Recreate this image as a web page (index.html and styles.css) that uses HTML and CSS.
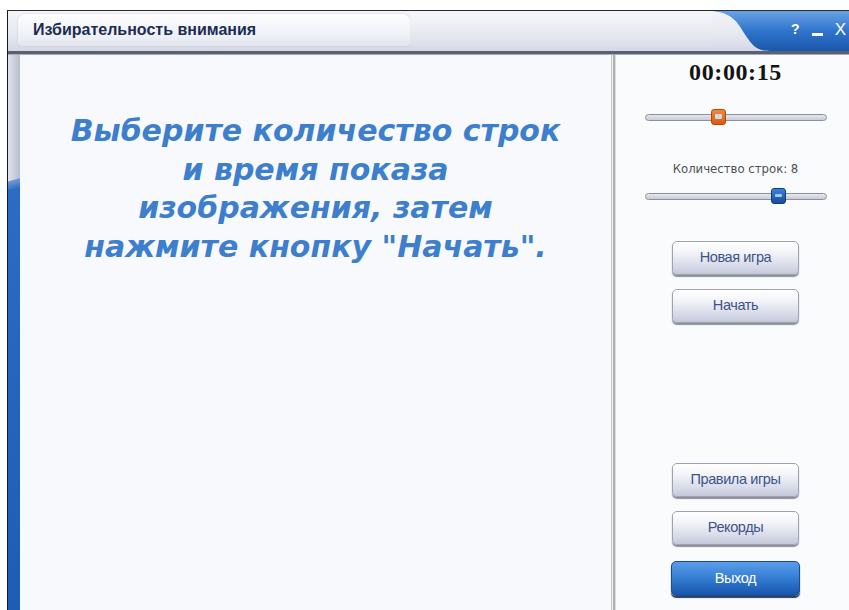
FILE: index.html
```html
<!DOCTYPE html>
<html lang="ru">
<head>
<meta charset="utf-8">
<title>Избирательность внимания</title>
<link rel="stylesheet" href="styles.css">
</head>
<body>
<div class="window">
  <div class="titlebar">
    <div class="title-tab">Избирательность внимания</div>
    <div class="title-fill"></div>
    <div class="title-controls">
      <svg class="controls-bg" width="137" height="42" viewBox="0 0 137 42">
        <defs>
          <linearGradient id="cg" x1="0" y1="0" x2="0" y2="1">
            <stop offset="0" stop-color="#6aa2e4"/>
            <stop offset="0.5" stop-color="#2f74cc"/>
            <stop offset="1" stop-color="#1a58ac"/>
          </linearGradient>
        </defs>
        <path d="M0 0 H137 V40 H58 C44 40 40 34 32 22 C24 8 18 2 0 0 Z" fill="url(#cg)"/>
      </svg>
      <span class="ctl ctl-help">?</span>
      <span class="ctl ctl-min"></span>
      <span class="ctl ctl-close">X</span>
    </div>
  </div>
  <div class="body">
    <div class="side-rail"></div>
    <div class="main">
      <p class="prompt">Выберите количество строк<br>и время показа<br>изображения, затем<br>нажмите кнопку "Начать".</p>
    </div>
    <div class="divider"></div>
    <div class="panel">
      <div class="timer">00:00:15</div>
      <div class="slider slider-time">
        <div class="track"></div>
        <div class="thumb thumb-orange"></div>
      </div>
      <div class="rows-label">Количество строк: 8</div>
      <div class="slider slider-rows">
        <div class="track"></div>
        <div class="thumb thumb-blue"></div>
      </div>
      <div class="btn-group top-group">
        <button class="btn">Новая игра</button>
        <button class="btn">Начать</button>
      </div>
      <div class="btn-group bottom-group">
        <button class="btn">Правила игры</button>
        <button class="btn">Рекорды</button>
        <button class="btn btn-exit">Выход</button>
      </div>
    </div>
  </div>
</div>
</body>
</html>
```
FILE: styles.css
```css
html, body {
  margin: 0;
  padding: 0;
  background: #ffffff;
}
body {
  padding: 10px 0 0 7px;
  width: 849px;
  height: 610px;
  box-sizing: border-box;
  overflow: hidden;
  font-family: "Liberation Sans", Arial, sans-serif;
}
.window {
  width: 842px;
  height: 600px;
  display: flex;
  flex-direction: column;
  border-left: 1px solid #1a1a1a;
  border-top: 1px solid #2a2a2a;
  box-sizing: border-box;
}

/* Title bar */
.titlebar {
  height: 40px;
  display: flex;
  align-items: stretch;
  background: linear-gradient(#f4f5f9, #e6e8f0 60%, #d4d8e4);
  border-bottom: 3px solid #5a6072;
  box-shadow: 0 1px 0 #a8acb8;
  position: relative;
}
.title-tab {
  margin: 3px 0 5px 10px;
  width: 392px;
  border-radius: 7px 7px 4px 4px;
  background: linear-gradient(#fdfdfe, #eef0f6 70%, #e2e5ee);
  box-shadow: 0 0 2px #c0c4d0;
  font-weight: bold;
  font-size: 16px;
  color: #1c2c54;
  padding: 0 0 0 15px;
  box-sizing: border-box;
  display: flex;
  align-items: center;
}
.title-fill {
  flex: 1;
  background: linear-gradient(#f6f7fa, #dcdfe9);
  margin: 3px 0 5px 0;
}
.title-controls {
  width: 137px;
  position: relative;
  display: flex;
  align-items: center;
  justify-content: flex-end;
  gap: 12px;
  padding-right: 3px;
  box-sizing: border-box;
  color: #ffffff;
  font-size: 15px;
}
.controls-bg {
  position: absolute;
  left: 0;
  top: 0;
}
.ctl {
  position: relative;
  line-height: 1;
  margin-bottom: 4px;
}
.ctl-help {
  font-weight: bold;
  font-size: 14px;
}
.ctl-min {
  width: 11px;
  height: 3px;
  background: #ffffff;
  margin-top: 10px;
}
.ctl-close {
  font-size: 17px;
}

/* Body */
.body {
  flex: 1;
  display: flex;
  min-height: 0;
}
.side-rail {
  width: 12px;
  background:
    linear-gradient(164deg, transparent 0, transparent 122px, #6f9ad8 123px, #2c6cc4 132px, #1e5db6 100%),
    linear-gradient(90deg, #dfe2ea, #c9cdd9 60%, #b8bdcc);
}
.main {
  width: 591px;
  background: #f8f9fc;
}
.prompt {
  margin: 58px 0 0 0;
  text-align: center;
  font-family: "DejaVu Sans", Verdana, sans-serif;
  font-weight: bold;
  font-style: italic;
  font-size: 30px;
  line-height: 38.5px;
  color: #3d7fcc;
  letter-spacing: 0;
}
.divider {
  width: 5px;
  background: linear-gradient(90deg, #c6c8c6 0, #c6c8c6 1px, #f0f0f0 1px, #f0f0f0 2px, #b0b2b0 2px, #b0b2b0 4px, #dcdcdc 4px);
}
.panel {
  flex: 1;
  background: #fafbfd;
  display: flex;
  flex-direction: column;
  align-items: center;
  padding-left: 6px;
}
.timer {
  margin-top: 5px;
  font-family: "Liberation Serif", "Times New Roman", serif;
  font-weight: bold;
  font-size: 24px;
  line-height: 26px;
  color: #141414;
  letter-spacing: 0.6px;
}
.slider {
  position: relative;
  width: 182px;
  height: 16px;
  display: flex;
  align-items: center;
}
.slider-time {
  margin-top: 24px;
}
.slider-rows {
  margin-top: 12px;
}
.track {
  width: 100%;
  height: 7px;
  border-radius: 4px;
  border: 1px solid #8a90a0;
  background: linear-gradient(#e6e8ee, #c8ccd8);
  box-sizing: border-box;
}
.thumb {
  position: absolute;
  top: 0;
  width: 15px;
  height: 16px;
  border-radius: 3px;
  box-sizing: border-box;
}
.thumb::after {
  content: "";
  position: absolute;
  left: 3px;
  right: 3px;
  top: 4px;
  bottom: 5px;
  background: #d4d8e4;
  border-radius: 1px;
}
.thumb-orange {
  left: 66px;
  background: linear-gradient(#f08a40, #d85a10);
  border: 1px solid #b84800;
}
.thumb-blue {
  left: 126px;
  background: linear-gradient(#3a84d8, #154c98);
  border: 1px solid #103c80;
}
.thumb-blue::after {
  top: 5px;
  bottom: 6px;
  background: #a8c4e8;
}
.rows-label {
  margin-top: 36px;
  color: #505050;
  font-family: "DejaVu Sans Condensed", "Liberation Sans", sans-serif;
  font-size: 13px;
}
.btn-group {
  display: flex;
  flex-direction: column;
  gap: 14px;
  align-items: center;
}
.top-group {
  margin-top: 37px;
}
.bottom-group {
  margin-top: auto;
  margin-bottom: 14px;
}
.btn {
  width: 127px;
  height: 34px;
  border-radius: 5px;
  border: 1px solid #9ea2b0;
  background: linear-gradient(#ffffff 0, #f2f3f8 35%, #d4d7e6 80%, #c4c8da 100%);
  box-shadow: 0 2px 1px #8c909c, inset 0 1px 0 #ffffff;
  font-family: "Liberation Sans", Arial, sans-serif;
  font-size: 14.5px;
  color: #3c5488;
  letter-spacing: -0.4px;
  padding: 0;
  padding-bottom: 2px;
}
.btn-exit {
  width: 129px;
  height: 35px;
  margin-top: 2px;
  color: #ffffff;
  border: 1px solid #1a4c94;
  background: linear-gradient(#5a9ce8 0, #3c84d8 40%, #2468c0 75%, #1a55a8 100%);
  box-shadow: 0 2px 1px #2a3e60;
}
```
